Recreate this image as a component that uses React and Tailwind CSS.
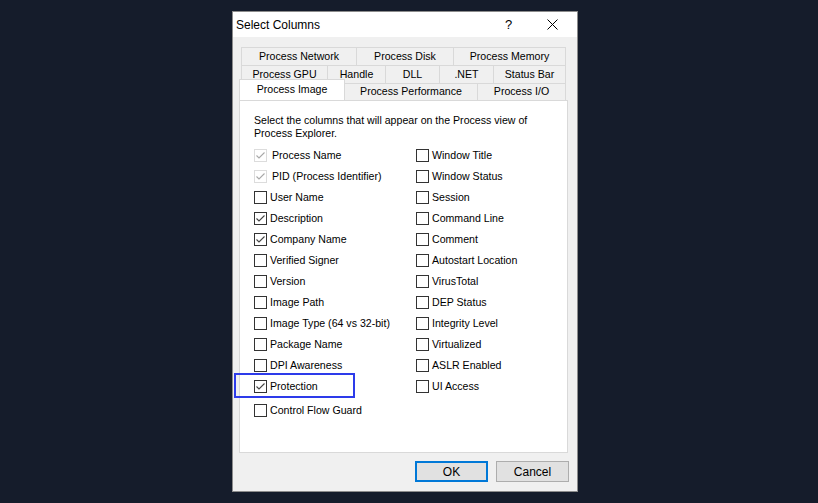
import React from "react";

const tabRows = [
  [
    ["Process Network", "w-[116px]"],
    ["Process Disk", "w-[97px]"],
    ["Process Memory", "w-[112px]"],
  ],
  [
    ["Process GPU", "w-[87px]"],
    ["Handle", "w-[58px]"],
    ["DLL", "w-[54px]"],
    [".NET", "w-[54px]"],
    ["Status Bar", "w-[72px]"],
  ],
];

const leftCols = [
  ["Process Name", "disabled"],
  ["PID (Process Identifier)", "disabled"],
  ["User Name", "off"],
  ["Description", "on"],
  ["Company Name", "on"],
  ["Verified Signer", "off"],
  ["Version", "off"],
  ["Image Path", "off"],
  ["Image Type (64 vs 32-bit)", "off"],
  ["Package Name", "off"],
  ["DPI Awareness", "off"],
  ["Protection", "on"],
  ["Control Flow Guard", "off"],
];

const rightCols = [
  ["Window Title", "off"],
  ["Window Status", "off"],
  ["Session", "off"],
  ["Command Line", "off"],
  ["Comment", "off"],
  ["Autostart Location", "off"],
  ["VirusTotal", "off"],
  ["DEP Status", "off"],
  ["Integrity Level", "off"],
  ["Virtualized", "off"],
  ["ASLR Enabled", "off"],
  ["UI Access", "off"],
];

function Check({ state }) {
  const disabled = state === "disabled";
  return (
    <span
      className={
        "w-[13px] h-[13px] shrink-0 border flex items-center justify-center bg-white " +
        (disabled ? "border-[#dcdcdc]" : "border-[#333333]")
      }
    >
      {state !== "off" && (
        <svg width="11" height="11" viewBox="0 0 11 11">
          <polyline
            points="1.5,5.5 4,8 9.5,2.5"
            fill="none"
            stroke={disabled ? "#a8a8a8" : "#444444"}
            strokeWidth="1.1"
          />
        </svg>
      )}
    </span>
  );
}

function Option({ label, state, last }) {
  return (
    <div className={"h-[21px] flex items-center " + (last ? "mt-[3px]" : "")}>
      <Check state={state} />
      <span className={state === "disabled" ? "ml-[5px]" : "ml-[3px]"}>{label}</span>
    </div>
  );
}

export default function App() {
  return (
    <div
      className="relative w-[818px] h-[503px] bg-[#151c2b] pl-[232px] pt-[11px] text-black"
      style={{ fontFamily: '"Liberation Sans", Arial, sans-serif' }}
    >
      <div className="w-[346px] h-[481px] bg-[#f0f0f0] border border-[#8c8c8c] flex flex-col">
        {/* title bar */}
        <div className="h-[25px] bg-white flex items-center pl-[3px] text-[12px]">
          <span className="flex-1">Select Columns</span>
          <span className="w-[10px] text-[13px] mr-[32px]">?</span>
          <svg width="11" height="11" viewBox="0 0 11 11" className="mr-[19px]">
            <path d="M0.5 0.5 L10.5 10.5 M10.5 0.5 L0.5 10.5" stroke="#000" strokeWidth="1" />
          </svg>
        </div>

        {/* tabs */}
        <div className="w-[335px] pl-[6px] pt-[10px] text-[10.6px]">
          {tabRows.map((row, i) => (
            <div key={i} className="flex h-[18px] ml-[2px]">
              {row.map(([name, w], j) => (
                <div
                  key={name}
                  className={
                    w +
                    " flex items-center justify-center border-t border-r border-[#d9d9d9] bg-[#f0f0f0] " +
                    (j === 0 ? "border-l" : "")
                  }
                >
                  {name}
                </div>
              ))}
            </div>
          ))}
          <div className="flex h-[17px] items-end relative z-10">
            <div className="w-[106px] h-[21px] bg-white border-t border-l border-r border-[#d9d9d9] flex justify-center pt-[2px]">
              Process Image
            </div>
            <div className="w-[133px] h-[17px] flex items-center justify-center border-t border-r border-[#d9d9d9]">
              Process Performance
            </div>
            <div className="w-[88px] h-[17px] flex items-center justify-center border-t border-r border-[#d9d9d9]">
              Process I/O
            </div>
          </div>

          {/* panel */}
          <div className="w-[329px] h-[353px] bg-white border border-[#d9d9d9] pl-[14px] pt-[13px]">
            <p className="leading-[13px] w-[285px]">
              Select the columns that will appear on the Process view of Process Explorer.
            </p>
            <div className="flex mt-[5px]">
              <div className="w-[162px] flex flex-col">
                {leftCols.map(([label, state], i) => (
                  <Option key={label} label={label} state={state} last={i === leftCols.length - 1} />
                ))}
              </div>
              <div className="flex flex-col">
                {rightCols.map(([label, state]) => (
                  <Option key={label} label={label} state={state} />
                ))}
              </div>
            </div>
          </div>
        </div>

        {/* buttons */}
        <div className="flex justify-end gap-[8px] pr-[8px] pt-[8px] text-[12px]">
          <button className="w-[73px] h-[21px] bg-[#e1e1e1] border-2 border-[#0078d7] flex items-center justify-center">
            OK
          </button>
          <button className="w-[73px] h-[21px] bg-[#e1e1e1] border border-[#adadad] flex items-center justify-center">
            Cancel
          </button>
        </div>
      </div>

      {/* highlight marker */}
      <div className="absolute left-[234px] top-[373px] w-[121px] h-[25px] border-2 border-[#2d3bea]" />
    </div>
  );
}
